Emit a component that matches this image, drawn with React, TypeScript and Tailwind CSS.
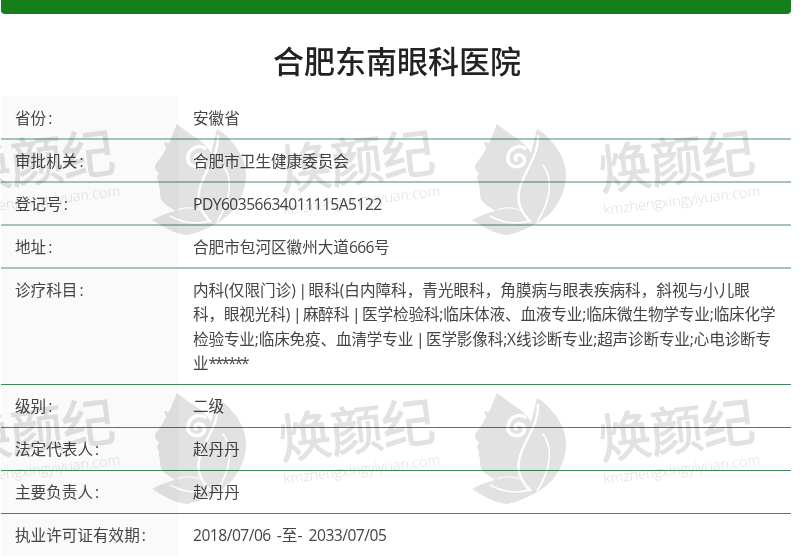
import type { ReactNode } from "react";

const upper = "border-b-2 border-[#a3c6b0]";
const lower = "border-b border-[#3f8a5c]";

function Pipe() {
  return <span className="tracking-[-1.3px] text-[#333333]"> | </span>;
}

const rows: { label: string; value: ReactNode; line: string; top: string; pad: string; lead: string }[] = [
  { label: "省份", value: "安徽省", line: upper, top: "pt-[10px]", pad: "pb-[8px]", lead: "leading-[24px]" },
  { label: "审批机关", value: "合肥市卫生健康委员会", line: upper, top: "pt-[9px]", pad: "pb-[8px]", lead: "leading-[24px]" },
  {
    label: "登记号",
    value: <span className="tracking-[-0.5px]">PDY60356634011115A5122</span>,
    line: upper,
    top: "pt-[9px]",
    pad: "pb-[8px]",
    lead: "leading-[24px]",
  },
  {
    label: "地址",
    value: (
      <>
        合肥市包河区徽州大道<span className="tracking-[-0.6px]">666</span>号
      </>
    ),
    line: upper,
    top: "pt-[9px]",
    pad: "pb-[8px]",
    lead: "leading-[24px]",
  },
  {
    label: "诊疗科目",
    value: (
      <>
        <span className="block whitespace-nowrap">
          内科(仅限门诊)
          <Pipe />
          眼科(白内障科{"\uFF0C"}青光眼科{"\uFF0C"}角膜病与眼表疾病科{"\uFF0C"}斜视与小儿眼
        </span>
        <span className="block whitespace-nowrap tracking-[-0.15px]">
          科{"\uFF0C"}眼视光科)
          <Pipe />
          麻醉科
          <Pipe />
          医学检验科;临床体液、血液专业;临床微生物学专业;临床化学
        </span>
        <span className="block whitespace-nowrap tracking-[-0.15px]">
          检验专业;临床免疫、血清学专业
          <Pipe />
          医学影像科;X线诊断专业;超声诊断专业;心电诊断专
        </span>
        <span className="block whitespace-nowrap">
          业<span className="tracking-[-2.1px]">******</span>
        </span>
      </>
    ),
    line: lower,
    top: "pt-[9px]",
    pad: "pb-[9px]",
    lead: "leading-[24.25px]",
  },
  { label: "级别", value: "二级", line: lower, top: "pt-[9px]", pad: "pb-[9px]", lead: "leading-[24px]" },
  { label: "法定代表人", value: "赵丹丹", line: lower, top: "pt-[9px]", pad: "pb-[9px]", lead: "leading-[24px]" },
  { label: "主要负责人", value: "赵丹丹", line: lower, top: "pt-[9px]", pad: "pb-[9px]", lead: "leading-[24px]" },
  {
    label: "执业许可证有效期",
    value: (
      <>
        <span className="tracking-[-0.5px]">2018/07/06</span> <span className="px-[2px]">-至-</span>{" "}
        <span className="tracking-[-0.5px]">2033/07/05</span>
      </>
    ),
    line: "",
    top: "pt-[9px]",
    pad: "pb-[9px]",
    lead: "leading-[24px]",
  },
];

function Logo() {
  return (
    <svg viewBox="0 0 120 130" className="w-[120px] h-[130px] shrink-0">
      <path
        d="M32 9 C38 14 44 18 50 22 C58 27 63 32 66 38 C68 30 70 22 72 14 L77 17 C90 28 102 44 101 62 C100 82 88 100 72 108 C62 114 52 118 42 120 C30 119 18 112 7 105 C14 101 22 98 30 96 C25 92 20 90 17 86 C15 83 15 80 15 77 C15 73 13 70 14 67 C11 64 12 61 14 58 C10 56 10 52 10 50 C14 45 18 40 21 33 C20 31 20 29 19 27 L24 28 C27 22 29 15 32 9 Z"
        fill="#e2e2e2"
      />
      <path
        d="M73 20 C74 40 60 55 55 72 C51 85 55 97 66 107"
        fill="none"
        stroke="#ffffff"
        strokeWidth="2.4"
      />
      <path d="M78 50 C87 62 88 82 72 107" fill="none" stroke="#ffffff" strokeWidth="1.6" />
      <path d="M25 101 C36 107 50 110 64 106" fill="none" stroke="#ffffff" strokeWidth="1.5" />
      <path d="M32 95 C40 92 50 92 58 97" fill="none" stroke="#ffffff" strokeWidth="1.2" />
      <path
        d="M60 33 C52 29 44 34 43 42 C42 50 50 54 57 50 C61 47 60 41 55 40 C51 39 49 43 51 45"
        fill="none"
        stroke="#ffffff"
        strokeWidth="3.5"
        strokeLinecap="round"
      />
    </svg>
  );
}

function Tile() {
  return (
    <div className="flex items-start w-[320px] h-[269px]">
      <Logo />
      <div className="flex flex-col ml-[14px] mt-[11px] w-[165px] -rotate-[7deg] origin-center">
        <span className="text-[53px] leading-[62px] tracking-[-1px] whitespace-nowrap text-[#e2e2e2] [-webkit-text-stroke:1px_#e2e2e2] font-['Noto_Sans_CJK_SC',sans-serif]">
          焕颜纪
        </span>
        <span className="mt-[2px] text-[14.4px] leading-[20px] whitespace-nowrap text-[#dedede] font-['Open_Sans',sans-serif] font-light">
          kmzhengxingyiyuan.com
        </span>
      </div>
    </div>
  );
}

export default function App() {
  return (
    <div className="relative w-[800px] h-[556px] overflow-hidden bg-white font-['Open_Sans','Noto_Sans_CJK_SC',sans-serif]">
      <div className="ml-px w-[790px]">
        <div className="h-[14px] bg-[#157f1a] rounded-b-[4px]" />
        <h1 className="h-[82px] pt-[25px] pl-[2px] text-center text-[31px] leading-[44px] font-medium text-[#222222]">
          合肥东南眼科医院
        </h1>
        <div className="flex flex-col">
          {rows.map((r) => (
            <div key={r.label} className={`flex ${r.line}`}>
              <div className={`w-[178px] shrink-0 bg-[#fafafa] pl-[14px] ${r.top} ${r.pad} text-[15.6px] ${r.lead} text-[#444444]`}>
                {r.label}
                <span className="ml-[2px]">:</span>
              </div>
              <div className={`flex-1 pl-[14px] pr-[13px] ${r.top} ${r.pad} text-[15.6px] ${r.lead} text-[#444444]`}>
                {r.value}
              </div>
            </div>
          ))}
        </div>
      </div>
      <div className="absolute left-[-175px] top-[115px] w-[966px] h-[441px] overflow-hidden grid grid-cols-[repeat(4,320px)] auto-rows-[269px] pointer-events-none mix-blend-multiply">
        {Array.from({ length: 8 }).map((_, i) => (
          <Tile key={i} />
        ))}
      </div>
    </div>
  );
}
